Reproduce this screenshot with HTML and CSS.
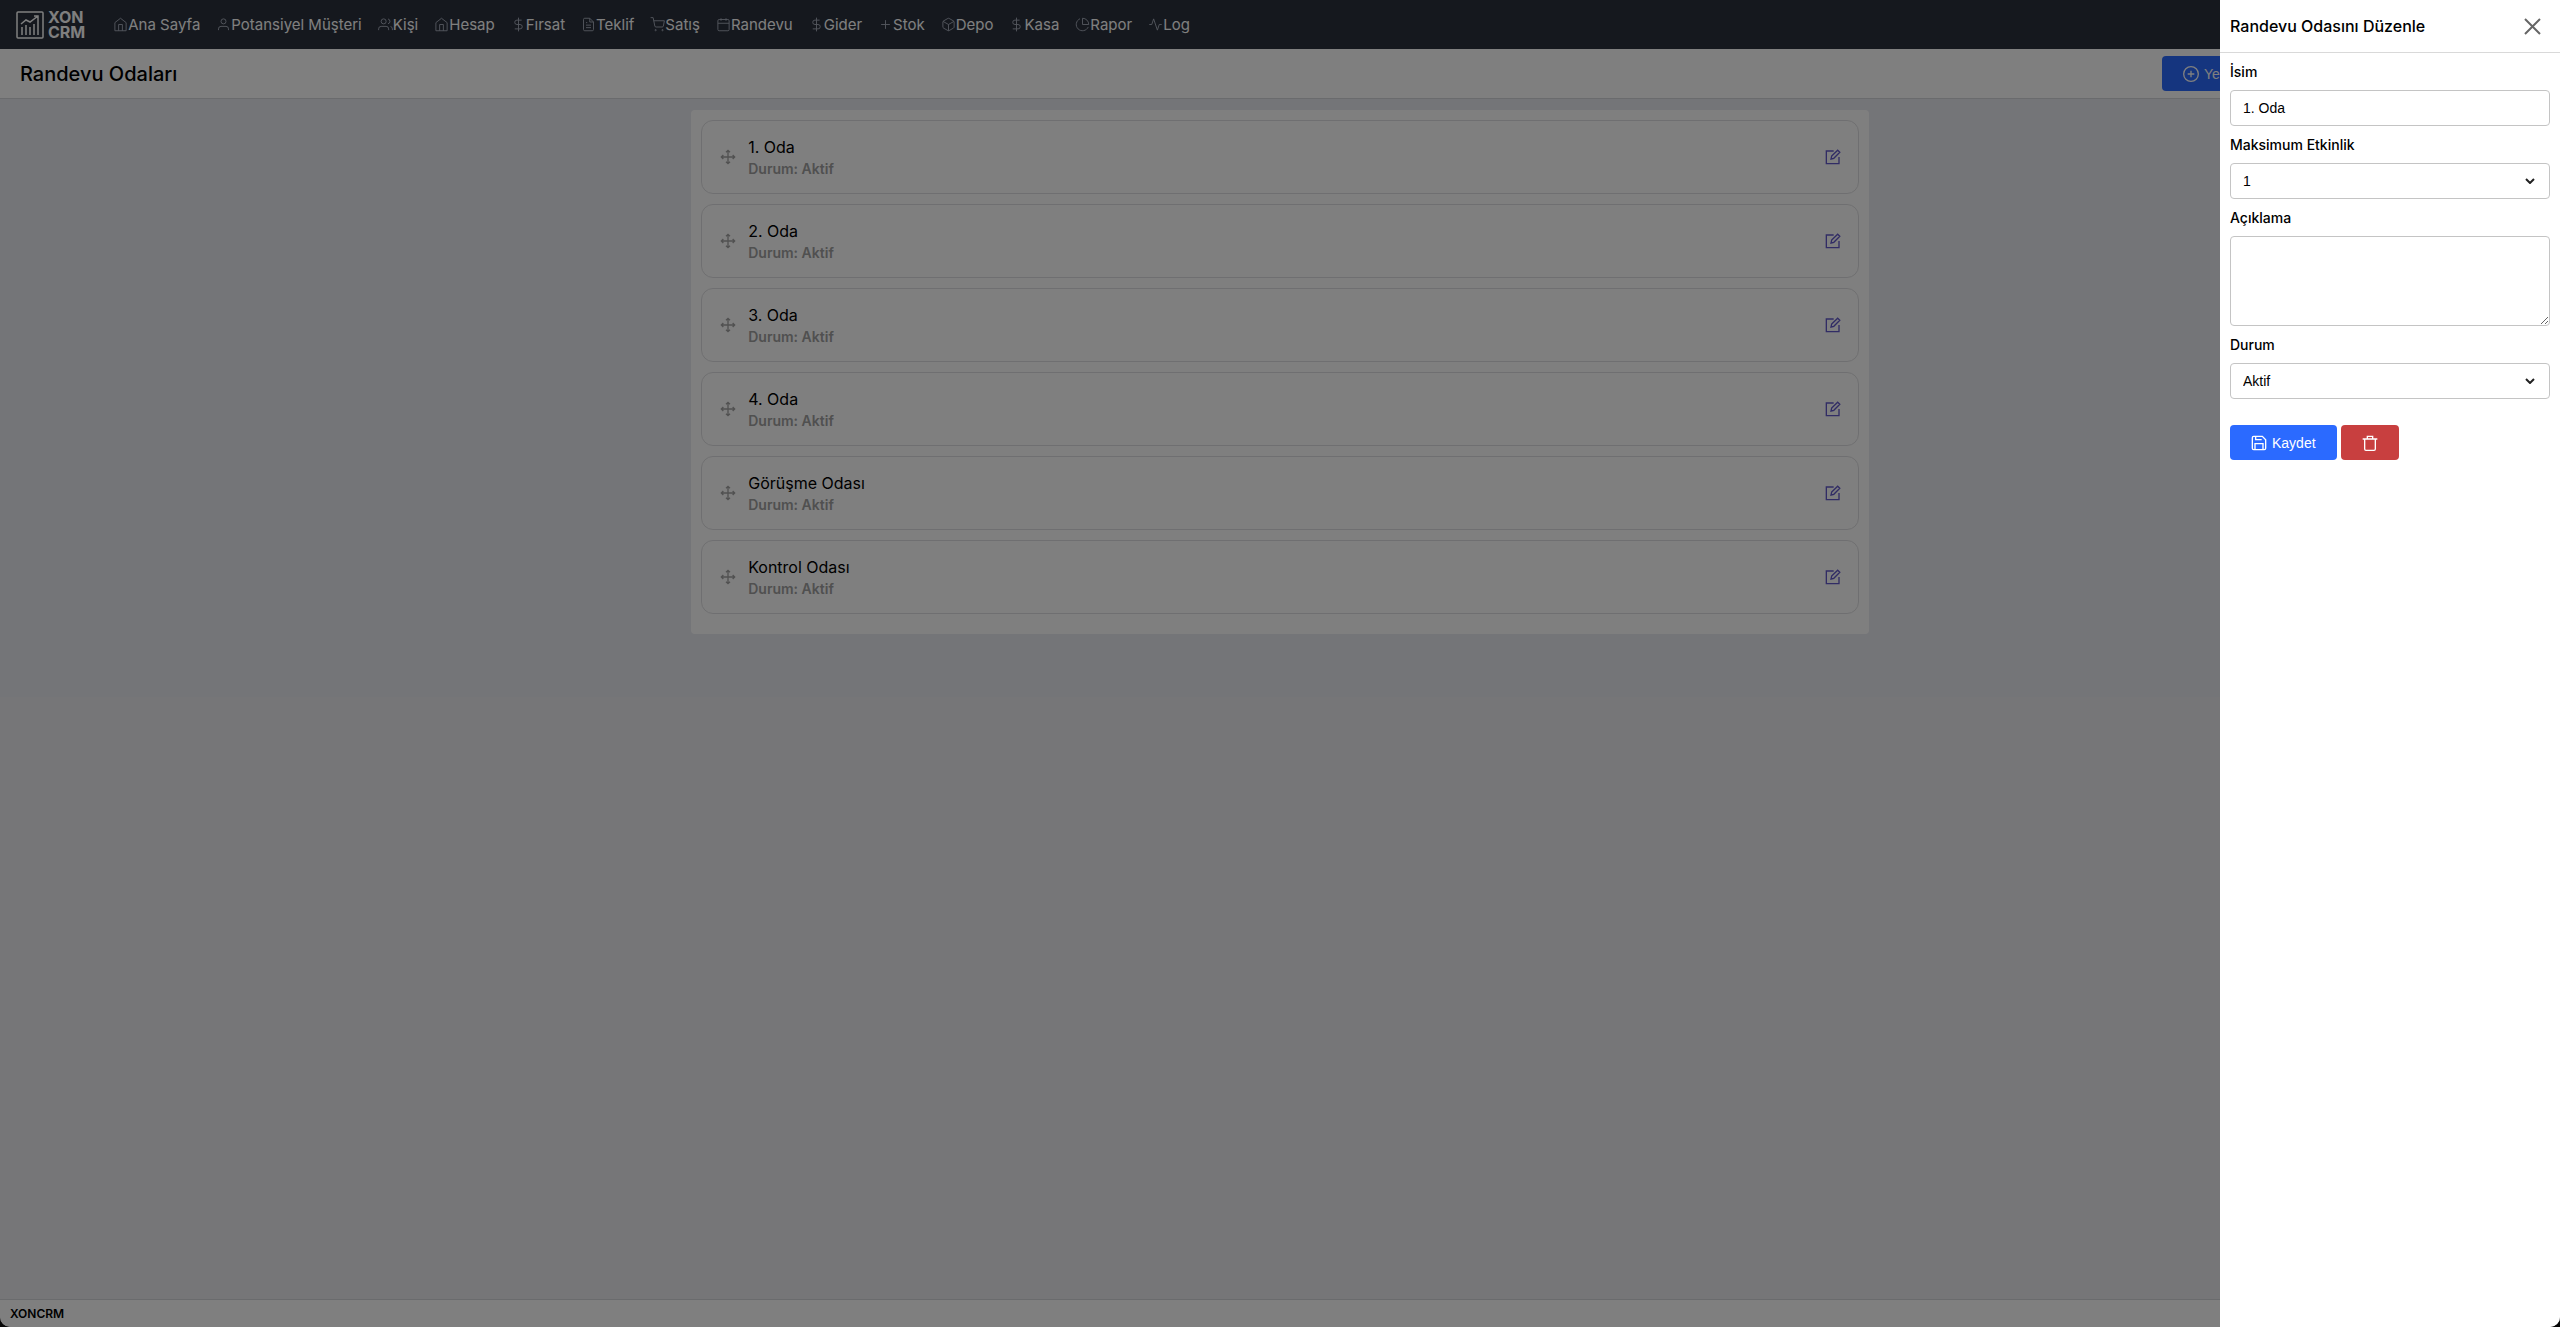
FILE: index.html
```
<!DOCTYPE html>
<html lang="tr">
<head>
  <meta charset="UTF-8">
  <meta name="viewport" content="width=device-width, initial-scale=1.0">
  <title>XONCRM - Randevu Odaları</title>
  <link rel="stylesheet" href="styles.css">
</head>
<body>
  <!-- shared icons -->
  <svg class="sprite" aria-hidden="true">
    <symbol id="i-home" viewBox="0 0 24 24"><path d="M3 9l9-7 9 7v13H3zM9 22V12h6v10"/></symbol>
    <symbol id="i-user" viewBox="0 0 24 24"><circle cx="12" cy="7" r="4"/><path d="M4 21v-2a4 4 0 0 1 4-4h8a4 4 0 0 1 4 4v2"/></symbol>
    <symbol id="i-users" viewBox="0 0 24 24"><circle cx="9" cy="7" r="4"/><path d="M1 21v-2a4 4 0 0 1 4-4h8a4 4 0 0 1 4 4v2M16 3.100a4 4 0 0 1 0 7.800M23 21v-2a4 4 0 0 0-3-3.900"/></symbol>
    <symbol id="i-dollar" viewBox="0 0 24 24"><path d="M12 1v22M17 5H9.500a3.500 3.500 0 0 0 0 7h5a3.500 3.500 0 0 1 0 7H6"/></symbol>
    <symbol id="i-file" viewBox="0 0 24 24"><path d="M14 2H6a2 2 0 0 0-2 2v16a2 2 0 0 0 2 2h12a2 2 0 0 0 2-2V8zM14 2v6h6M16 13H8M16 17H8M10 9H8"/></symbol>
    <symbol id="i-cart" viewBox="0 0 24 24"><circle cx="9" cy="21" r="1"/><circle cx="20" cy="21" r="1"/><path d="M1 1h4l2.700 13.400a2 2 0 0 0 2 1.600h9.700a2 2 0 0 0 2-1.600L23 6H6"/></symbol>
    <symbol id="i-calendar" viewBox="0 0 24 24"><rect x="3" y="4" width="18" height="18" rx="2"/><path d="M16 2v4M8 2v4M3 10h18"/></symbol>
    <symbol id="i-plus" viewBox="0 0 24 24"><path d="M12 5v14M5 12h14"/></symbol>
    <symbol id="i-box" viewBox="0 0 24 24"><path d="M21 16V8a2 2 0 0 0-1-1.700l-7-4a2 2 0 0 0-2 0l-7 4A2 2 0 0 0 3 8v8a2 2 0 0 0 1 1.700l7 4a2 2 0 0 0 2 0l7-4a2 2 0 0 0 1-1.700zM3.300 7l8.700 5 8.700-5M12 22V12"/></symbol>
    <symbol id="i-pie" viewBox="0 0 24 24"><path d="M21.200 15.900A10 10 0 1 1 8 2.800M22 12A10 10 0 0 0 12 2v10z"/></symbol>
    <symbol id="i-activity" viewBox="0 0 24 24"><path d="M22 12h-4l-3 9L9 3l-3 9H2"/></symbol>
    <symbol id="i-move" viewBox="0 0 24 24"><path d="M5 9l-3 3 3 3M9 5l3-3 3 3M15 19l-3 3-3-3M19 9l3 3-3 3M2 12h20M12 2v20"/></symbol>
    <symbol id="i-edit" viewBox="0 0 24 24"><path d="M13 3H2v19h19V12M10 10.500L19 1.800l3.200 3.200-9 9-4.200 1z"/></symbol>
    <symbol id="i-add" viewBox="0 0 24 24"><circle cx="12" cy="12" r="11"/><path d="M12 7v10M7 12h10"/></symbol>
    <symbol id="i-save" viewBox="0 0 24 24"><path d="M4 2h13l5 5v13a2 2 0 0 1-2 2H4a2 2 0 0 1-2-2V4a2 2 0 0 1 2-2zM7 2v5h9M6 22v-9h12v9"/></symbol>
    <symbol id="i-trash" viewBox="0 0 24 24"><path d="M1 6h22M4 6v15a2 2 0 0 0 2 2h12a2 2 0 0 0 2-2V6M8 6V2h8v4"/></symbol>
    <symbol id="i-close" viewBox="0 0 24 24"><path d="M5 5l15 15M20 5L5 20"/></symbol>
  </svg>

  <nav class="navbar">
    <a class="logo" href="#">
      <svg class="logo-mark" viewBox="0 0 28 28"><rect x="1" y="1" width="26" height="26" rx="1"/><path d="M6 24v-8M10 24V14M14 24v-8M18 24V13M22 24V9M5 13l5-4 4 2 8-6M18 5h4v4"/></svg>
      <span class="logo-text">XON<br>CRM</span>
    </a>
    <ul class="menu">
      <li><a href="#"><svg class="icon"><use href="#i-home"/></svg>Ana Sayfa</a></li>
      <li><a href="#"><svg class="icon"><use href="#i-user"/></svg>Potansiyel Müşteri</a></li>
      <li><a href="#"><svg class="icon"><use href="#i-users"/></svg>Kişi</a></li>
      <li><a href="#"><svg class="icon"><use href="#i-home"/></svg>Hesap</a></li>
      <li><a href="#"><svg class="icon"><use href="#i-dollar"/></svg>Fırsat</a></li>
      <li><a href="#"><svg class="icon"><use href="#i-file"/></svg>Teklif</a></li>
      <li><a href="#"><svg class="icon"><use href="#i-cart"/></svg>Satış</a></li>
      <li><a href="#"><svg class="icon"><use href="#i-calendar"/></svg>Randevu</a></li>
      <li><a href="#"><svg class="icon"><use href="#i-dollar"/></svg>Gider</a></li>
      <li><a href="#"><svg class="icon"><use href="#i-plus"/></svg>Stok</a></li>
      <li><a href="#"><svg class="icon"><use href="#i-box"/></svg>Depo</a></li>
      <li><a href="#"><svg class="icon"><use href="#i-dollar"/></svg>Kasa</a></li>
      <li><a href="#"><svg class="icon"><use href="#i-pie"/></svg>Rapor</a></li>
      <li><a href="#"><svg class="icon"><use href="#i-activity"/></svg>Log</a></li>
    </ul>
  </nav>

  <header class="page-header">
    <h1>Randevu Odaları</h1>
    <div class="page-actions">
      <button class="btn btn-primary" type="button"><svg class="icon"><use href="#i-add"/></svg>Yeni</button>
    </div>
  </header>

  <main class="content">
    <ul class="rooms">
      <li class="room">
        <svg class="icon handle"><use href="#i-move"/></svg>
        <div class="room-info"><h2>1. Oda</h2><p>Durum: Aktif</p></div>
        <button class="edit" type="button" aria-label="Düzenle"><svg class="icon"><use href="#i-edit"/></svg></button>
      </li>
      <li class="room">
        <svg class="icon handle"><use href="#i-move"/></svg>
        <div class="room-info"><h2>2. Oda</h2><p>Durum: Aktif</p></div>
        <button class="edit" type="button" aria-label="Düzenle"><svg class="icon"><use href="#i-edit"/></svg></button>
      </li>
      <li class="room">
        <svg class="icon handle"><use href="#i-move"/></svg>
        <div class="room-info"><h2>3. Oda</h2><p>Durum: Aktif</p></div>
        <button class="edit" type="button" aria-label="Düzenle"><svg class="icon"><use href="#i-edit"/></svg></button>
      </li>
      <li class="room">
        <svg class="icon handle"><use href="#i-move"/></svg>
        <div class="room-info"><h2>4. Oda</h2><p>Durum: Aktif</p></div>
        <button class="edit" type="button" aria-label="Düzenle"><svg class="icon"><use href="#i-edit"/></svg></button>
      </li>
      <li class="room">
        <svg class="icon handle"><use href="#i-move"/></svg>
        <div class="room-info"><h2>Görüşme Odası</h2><p>Durum: Aktif</p></div>
        <button class="edit" type="button" aria-label="Düzenle"><svg class="icon"><use href="#i-edit"/></svg></button>
      </li>
      <li class="room">
        <svg class="icon handle"><use href="#i-move"/></svg>
        <div class="room-info"><h2>Kontrol Odası</h2><p>Durum: Aktif</p></div>
        <button class="edit" type="button" aria-label="Düzenle"><svg class="icon"><use href="#i-edit"/></svg></button>
      </li>
    </ul>
  </main>

  <footer class="footer">XONCRM</footer>

  <div class="overlay"></div>

  <aside class="drawer">
    <div class="drawer-header">
      <h2>Randevu Odasını Düzenle</h2>
      <button class="close" type="button" aria-label="Kapat"><svg class="icon"><use href="#i-close"/></svg></button>
    </div>
    <form class="drawer-form">
      <label for="name">İsim</label>
      <input class="field" id="name" type="text" value="1. Oda">

      <label for="max-event">Maksimum Etkinlik</label>
      <div class="select">
        <select class="field" id="max-event"><option>1</option><option>2</option><option>3</option></select>
        <svg class="chevron" viewBox="0 0 10 6"><path d="M1 1l4 4 4-4"/></svg>
      </div>

      <label for="description">Açıklama</label>
      <textarea class="field" id="description"></textarea>

      <label for="status">Durum</label>
      <div class="select">
        <select class="field" id="status"><option>Aktif</option><option>Pasif</option></select>
        <svg class="chevron" viewBox="0 0 10 6"><path d="M1 1l4 4 4-4"/></svg>
      </div>

      <div class="form-actions">
        <button class="btn btn-primary" type="button"><svg class="icon"><use href="#i-save"/></svg>Kaydet</button>
        <button class="btn btn-danger" type="button" aria-label="Sil"><svg class="icon"><use href="#i-trash"/></svg></button>
      </div>
    </form>
  </aside>
</body>
</html>
```
FILE: styles.css
```
* {
  box-sizing: border-box;
}
html {
  background: #0c0c0c;
}
body {
  display: flex;
  flex-direction: column;
  min-height: 100vh;
  margin: 0;
  background: #ecedf0;
  border-radius: 0 0 10px 10px;
  font-family: Inter, sans-serif;
  font-size: 14px;
  color: #000;
}
h1, h2, p, ul {
  margin: 0;
  padding: 0;
}
ul {
  list-style: none;
}
button {
  font-family: "Liberation Sans", Arial, sans-serif;
  cursor: pointer;
}
.sprite {
  display: none;
}
.icon {
  width: 16px;
  height: 16px;
  flex-shrink: 0;
  fill: none;
  stroke: currentColor;
  stroke-width: 2;
}

/* top navigation */
.navbar {
  display: flex;
  align-items: center;
  gap: 28px;
  height: 49px;
  padding: 0 16px;
  background: #2a303c;
}
.logo {
  display: flex;
  align-items: center;
  gap: 4px;
  color: #fff;
  text-decoration: none;
}
.logo-mark {
  width: 28px;
  height: 28px;
  fill: none;
  stroke: #fff;
  stroke-width: 1.5;
}
.logo-text {
  font-size: 16px;
  font-weight: 700;
  line-height: 15px;
}
.menu {
  display: flex;
  gap: 16px;
}
.menu a {
  display: flex;
  align-items: center;
  font-size: 15px;
  font-weight: 400;
  line-height: 20px;
  color: #fff;
  text-decoration: none;
}
.menu .icon {
  width: 15px;
  height: 15px;
  stroke-width: 1.5;
  color: #a6adbb;
}

/* page title bar */
.page-header {
  display: flex;
  align-items: center;
  justify-content: space-between;
  height: 50px;
  padding: 0 20px;
  background: #fff;
  border-bottom: 1px solid #d5d7db;
}
.page-header h1 {
  font-size: 20px;
  font-weight: 500;
}
.page-actions {
  width: 378px;
}
.btn {
  display: inline-flex;
  align-items: center;
  gap: 5px;
  height: 35px;
  padding: 0 21px;
  border: 0;
  border-radius: 4px;
  font-size: 14px;
  color: #fff;
}
.btn-primary {
  background: #2b6aff;
}
.btn-danger {
  background: #c83f3f;
}

/* room list */
.content {
  min-height: 598px;
  padding: 11px 0;
  background: #e9ebf0;
}
.rooms {
  display: flex;
  flex-direction: column;
  gap: 10px;
  width: 46%;
  margin: 0 auto;
  padding: 10px 10px 20px;
  background: #fff;
  border-radius: 4px;
}
.room {
  display: flex;
  align-items: center;
  gap: 12px;
  height: 74px;
  padding: 0 17px 0 18px;
  border: 1px solid #dfdfe2;
  border-radius: 12px;
}
.room-info {
  flex: 1;
}
.room-info h2 {
  font-size: 16px;
  font-weight: 400;
  line-height: 24px;
}
.room-info p {
  font-weight: 600;
  line-height: 20px;
  color: #a0a0a0;
}
.handle {
  color: #a3a3a3;
}
.edit {
  display: flex;
  padding: 0;
  border: 0;
  background: none;
  color: #6259ca;
}

.footer {
  margin-top: auto;
  padding: 0 10px;
  background: #fff;
  border-top: 1px solid #d5d7db;
  border-radius: 0 0 10px 10px;
  font-size: 12px;
  font-weight: 600;
  line-height: 27px;
}

/* edit drawer */
.overlay {
  position: fixed;
  inset: 0;
  background: rgba(0, 0, 0, 0.5);
}
.drawer {
  position: fixed;
  top: 0;
  right: 0;
  bottom: 0;
  width: 340px;
  background: #fff;
  border-radius: 0 0 10px 0;
}
.drawer-header {
  display: flex;
  align-items: center;
  justify-content: space-between;
  height: 53px;
  padding: 0 16px 0 10px;
  border-bottom: 1px solid #d9d9d9;
}
.drawer-header h2 {
  font-size: 16px;
  font-weight: 500;
}
.close {
  display: flex;
  padding: 0;
  border: 0;
  background: none;
  color: #666;
}
.close .icon {
  width: 24px;
  height: 24px;
}
.drawer-form {
  display: flex;
  flex-direction: column;
  padding: 0 10px;
}
.drawer-form label {
  padding: 8px 0;
  font-weight: 500;
  line-height: 21px;
}
.field {
  display: block;
  width: 100%;
  height: 36px;
  padding: 0 12px;
  background: #fff;
  border: 1px solid #c4c4c4;
  border-radius: 4px;
  font-family: "Liberation Sans", Arial, sans-serif;
  font-size: 14px;
  color: #000;
}
select.field {
  appearance: none;
}
textarea.field {
  height: 90px;
  padding: 8px 12px;
}
.select {
  position: relative;
}
.chevron {
  position: absolute;
  top: 15px;
  right: 15px;
  width: 10px;
  height: 6px;
  fill: none;
  stroke: #222;
  stroke-width: 2;
  pointer-events: none;
}
.form-actions {
  display: flex;
  gap: 4px;
  margin-top: 26px;
}
```
